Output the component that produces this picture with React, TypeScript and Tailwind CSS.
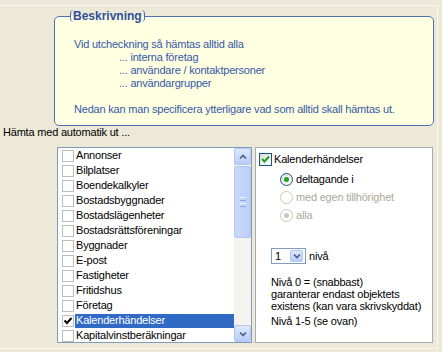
import type { ReactNode } from "react";

const items = [
  "Annonser",
  "Bilplatser",
  "Boendekalkyler",
  "Bostadsbyggnader",
  "Bostadslägenheter",
  "Bostadsrättsföreningar",
  "Byggnader",
  "E-post",
  "Fastigheter",
  "Fritidshus",
  "Företag",
  "Kalenderhändelser",
  "Kapitalvinstberäkningar",
];

function Chevron({ up = false }: { up?: boolean }) {
  return (
    <svg width="8" height="6" viewBox="0 0 8 6" className={up ? "rotate-180" : ""}>
      <path d="M1 1.5 L4 4.5 L7 1.5" fill="none" stroke="#4d6185" strokeWidth="1.7" />
    </svg>
  );
}

function ScrollButton({ up = false }: { up?: boolean }) {
  return (
    <div className="flex h-[17px] w-[17px] items-center justify-center rounded-[2px] border border-[#b3c6f2] bg-gradient-to-b from-[#dfe8fd] to-[#b8cbf8]">
      <Chevron up={up} />
    </div>
  );
}

function ListRow({ label, checked }: { label: string; checked: boolean }) {
  return (
    <div className="flex h-[15px] items-center">
      <span className="ml-[4px] mr-px flex h-[12px] w-[12px] shrink-0 items-center justify-center border border-[#bdbdbd] bg-white">
        {checked && (
          <svg width="10" height="10" viewBox="0 0 10 10">
            <path d="M1.5 4.5 L4 7 L8.5 2" fill="none" stroke="#000" strokeWidth="2" />
          </svg>
        )}
      </span>
      <span
        className={`flex h-[14px] flex-1 items-center pl-px ${checked ? "bg-[#316ac5] text-white" : "text-black"}`}
      >
        {label}
      </span>
    </div>
  );
}

function Radio({ selected, disabled, children }: { selected?: boolean; disabled?: boolean; children: ReactNode }) {
  return (
    <div className="flex h-[18px] items-center gap-[3px]">
      <span
        className={`flex h-[13px] w-[13px] items-center justify-center rounded-full border ${
          disabled ? "border-[#cac8bb] bg-white" : "border-[#1c5180] bg-gradient-to-br from-[#dcdcd7] to-white"
        }`}
      >
        {selected && (
          <span
            className={`h-[5px] w-[5px] rounded-full ${disabled ? "bg-[#cac8bb]" : "bg-[#21a121]"}`}
          />
        )}
      </span>
      <span className={disabled ? "text-[#aca899]" : "text-black"}>{children}</span>
    </div>
  );
}

export default function App() {
  return (
    <div className="h-[352px] w-[442px] overflow-hidden bg-[#ece9d8] font-['Liberation_Sans',Arial,sans-serif] text-[11px] leading-[13px] tracking-[-0.2px] text-black">
      <div className="mt-[5px] h-[344px] w-[438px] border-t border-r border-b border-[#f9f8f3]">
        {/* Beskrivning */}
        <fieldset className="ml-[54px] mt-[4px] w-[380px] rounded-[5px] border border-[#4f70ae] bg-[#ffffe1] pb-[9px] pl-[19px] pt-[16px] text-[#3559a6]">
          <legend className="-ml-[4px]">
            <span className="flex h-[12px] items-center rounded-[4px] border-x border-[#4f70ae] px-[2px] text-[12px] font-bold tracking-normal text-[#30509a]">
              Beskrivning
            </span>
          </legend>
          <div>Vid utcheckning så hämtas alltid alla</div>
          <div className="pl-[45px]">... interna företag</div>
          <div className="pl-[45px]">... användare / kontaktpersoner</div>
          <div className="pl-[45px]">... användargrupper</div>
          <div className="h-[13px]" />
          <div>Nedan kan man specificera ytterligare vad som alltid skall hämtas ut.</div>
        </fieldset>

        <div className="pl-[3px]">Hämta med automatik ut ...</div>

        <div className="ml-[57px] mt-[8px] flex gap-[3px]">
          {/* List */}
          <div className="flex h-[196px] w-[195px] border border-[#7f9db9] bg-white">
            <div className="flex-1 overflow-hidden">
              {items.map((label) => (
                <ListRow key={label} label={label} checked={label === "Kalenderhändelser"} />
              ))}
            </div>
            <div className="flex w-[17px] flex-col bg-[#f4f3ee]">
              <ScrollButton up />
              <div className="mt-px flex h-[72px] flex-col items-center justify-center gap-[2px] rounded-[2px] border border-[#b3c6f2] bg-gradient-to-r from-[#c9d8fc] to-[#bccffa]">
                <span className="h-px w-[6px] bg-[#eef3fe]" />
                <span className="h-px w-[6px] bg-[#8ca6e6]" />
                <span className="h-px w-[6px] bg-[#eef3fe]" />
                <span className="h-px w-[6px] bg-[#8ca6e6]" />
              </div>
              <div className="flex-1" />
              <ScrollButton />
            </div>
          </div>

          {/* Detail panel */}
          <div className="h-[196px] w-[178px] border border-[#a5acb5] bg-white pl-[3px] pt-[5px]">
            <div className="flex h-[13px] items-center gap-[2px]">
              <span className="flex h-[13px] w-[13px] items-center justify-center border border-[#1c5180] bg-gradient-to-br from-[#dcdcd7] to-white">
                <svg width="9" height="9" viewBox="0 0 9 9">
                  <path d="M1 4 L3.5 6.5 L8 1.5" fill="none" stroke="#21a121" strokeWidth="2" />
                </svg>
              </span>
              <span>Kalenderhändelser</span>
            </div>
            <div className="ml-[21px] mt-[4px]">
              <Radio selected>deltagande i</Radio>
              <Radio disabled>med egen tillhörighet</Radio>
              <Radio selected disabled>
                alla
              </Radio>
            </div>
            <div className="ml-[12px] mt-[24px] flex items-center gap-[3px]">
              <div className="flex h-[16px] w-[35px] items-center border border-[#7f9db9] bg-white">
                <span className="flex-1 pl-[3px]">1</span>
                <span className="mr-[2px] flex h-[12px] w-[13px] items-center justify-center rounded-[2px] border border-[#b3c6f2] bg-gradient-to-b from-[#dfe8fd] to-[#b8cbf8]">
                  <Chevron />
                </span>
              </div>
              <span>nivå</span>
            </div>
            <div className="ml-[12px] mt-[12px] leading-[12px]">
              <div>Nivå 0 = (snabbast)</div>
              <div>garanterar endast objektets</div>
              <div>existens (kan vara skrivskyddat)</div>
              <div className="mt-[3px]">Nivå 1-5 (se ovan)</div>
            </div>
          </div>
        </div>
      </div>
    </div>
  );
}
